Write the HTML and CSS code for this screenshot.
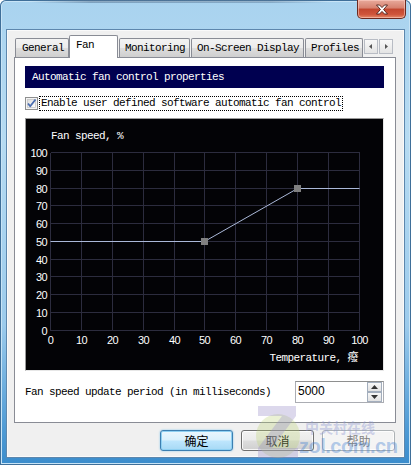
FILE: index.html
```html
<!DOCTYPE html>
<html>
<head>
<meta charset="utf-8">
<link rel="stylesheet" href="styles.css">
</head>
<body>
<div class="window">
  <div class="titlebar">
    <div class="topshade"></div>
    <div class="close">
      <svg width="14" height="11" viewBox="0 0 14 11"><path d="M1.5 1 L4.5 1 L7 3.6 L9.5 1 L12.5 1 L8.6 5.5 L12.5 10 L9.5 10 L7 7.4 L4.5 10 L1.5 10 L5.4 5.5 Z" fill="#fff" stroke="#4a1d17" stroke-width="0.9" stroke-linejoin="round"/></svg>
    </div>
  </div>
  <div class="client">
    <div class="tabs">
      <div class="tab t-general">General</div>
      <div class="tab active t-fan">Fan</div>
      <div class="tab t-mon">Monitoring</div>
      <div class="tab t-osd">On-Screen Display</div>
      <div class="tab t-prof">Profiles</div>
      <div class="tabscroll">
        <span class="sbtn"><svg width="6" height="7" viewBox="0 0 6 7"><path d="M4 1 L1 3.5 L4 6 Z" fill="#555"/></svg></span>
        <span class="sbtn"><svg width="6" height="7" viewBox="0 0 6 7"><path d="M2 1 L5 3.5 L2 6 Z" fill="#555"/></svg></span>
      </div>
    </div>
    <div class="panel">
      <div class="header">Automatic fan control properties</div>
      <div class="checkrow">
        <span class="checkbox">
          <svg width="13" height="13" viewBox="0 0 13 13">
            <defs>
              <linearGradient id="cbg" x1="0" y1="0" x2="1" y2="1">
                <stop offset="0" stop-color="#dcdcdc"/>
                <stop offset="1" stop-color="#ffffff"/>
              </linearGradient>
            </defs>
            <rect x="0.5" y="0.5" width="12" height="12" fill="#f4f4f4" stroke="#8e8f8f"/>
            <rect x="2.5" y="2.5" width="8" height="8" fill="url(#cbg)" stroke="#c6c6c6" stroke-width="0.8"/>
            <path d="M3 6.5 L5.2 9.3 L10.5 2.5" fill="none" stroke="#4a6db0" stroke-width="1.8" stroke-linejoin="round"/>
          </svg>
        </span>
        <span class="focus">Enable user defined software automatic fan control</span>
      </div>
      <div class="graph">
        <svg width="357" height="251" viewBox="0 0 357 251" class="plot">
          <g stroke="#2c2c3e" stroke-width="1" shape-rendering="crispEdges">
            <line x1="24.5" y1="33.5" x2="24.5" y2="211.5"/>
            <line x1="55.5" y1="33.5" x2="55.5" y2="211.5"/>
            <line x1="86.5" y1="33.5" x2="86.5" y2="211.5"/>
            <line x1="117.5" y1="33.5" x2="117.5" y2="211.5"/>
            <line x1="148.5" y1="33.5" x2="148.5" y2="211.5"/>
            <line x1="178.5" y1="33.5" x2="178.5" y2="211.5"/>
            <line x1="209.5" y1="33.5" x2="209.5" y2="211.5"/>
            <line x1="240.5" y1="33.5" x2="240.5" y2="211.5"/>
            <line x1="271.5" y1="33.5" x2="271.5" y2="211.5"/>
            <line x1="302.5" y1="33.5" x2="302.5" y2="211.5"/>
            <line x1="333.5" y1="33.5" x2="333.5" y2="211.5"/>
            <line x1="24.5" y1="33.5" x2="333.5" y2="33.5"/>
            <line x1="24.5" y1="51.5" x2="333.5" y2="51.5"/>
            <line x1="24.5" y1="69.5" x2="333.5" y2="69.5"/>
            <line x1="24.5" y1="86.5" x2="333.5" y2="86.5"/>
            <line x1="24.5" y1="104.5" x2="333.5" y2="104.5"/>
            <line x1="24.5" y1="122.5" x2="333.5" y2="122.5"/>
            <line x1="24.5" y1="140.5" x2="333.5" y2="140.5"/>
            <line x1="24.5" y1="157.5" x2="333.5" y2="157.5"/>
            <line x1="24.5" y1="175.5" x2="333.5" y2="175.5"/>
            <line x1="24.5" y1="193.5" x2="333.5" y2="193.5"/>
            <line x1="24.5" y1="211.5" x2="333.5" y2="211.5"/>
          </g>
          <polyline points="24.5,122.5 178.5,122.5 271.5,69.5 333.5,69.5" fill="none" stroke="#aab8d8" stroke-width="1"/>
          <rect x="175" y="119" width="7" height="7" fill="#808080"/>
          <rect x="268" y="66" width="7" height="7" fill="#808080"/>
          <g class="ylab" text-anchor="end">
            <text x="21" y="37.5">100</text>
            <text x="21" y="55.5">90</text>
            <text x="21" y="73.5">80</text>
            <text x="21" y="90.5">70</text>
            <text x="21" y="108.5">60</text>
            <text x="21" y="126.5">50</text>
            <text x="21" y="144.5">40</text>
            <text x="21" y="161.5">30</text>
            <text x="21" y="179.5">20</text>
            <text x="21" y="197.5">10</text>
            <text x="21" y="215.5">0</text>
          </g>
          <g class="xlab" text-anchor="middle">
            <text x="24.5" y="225">0</text>
            <text x="55.5" y="225">10</text>
            <text x="86.5" y="225">20</text>
            <text x="117.5" y="225">30</text>
            <text x="148.5" y="225">40</text>
            <text x="178.5" y="225">50</text>
            <text x="209.5" y="225">60</text>
            <text x="240.5" y="225">70</text>
            <text x="271.5" y="225">80</text>
            <text x="302.5" y="225">90</text>
            <text x="333.5" y="225">100</text>
          </g>
          <text class="axtitle" x="25" y="20">Fan speed, %</text>
          <text class="axtitle" x="332" y="242" text-anchor="end">Temperature, 癈</text>
        </svg>
      </div>
      <div class="periodrow">
        <span class="plabel">Fan speed update period (in milliseconds)</span>
        <div class="spin">
          <span class="val">5000</span>
          <div class="spinbtns">
            <span class="sb"><svg width="7" height="4" viewBox="0 0 7 4"><path d="M0 4 L3.5 0 L7 4 Z" fill="#333"/></svg></span>
            <span class="sb"><svg width="7" height="4" viewBox="0 0 7 4"><path d="M0 0 L3.5 4 L7 0 Z" fill="#333"/></svg></span>
          </div>
        </div>
      </div>
    </div>
    <div class="buttons">
      <div class="btn default">确定</div>
      <div class="btn">取消</div>
      <div class="btn disabled">帮助</div>
    </div>
  </div>
  <div class="watermark">
    <svg class="zlogo" width="48" height="56" viewBox="0 0 48 56">
      <circle cx="24" cy="32" r="22" fill="#b8d070" opacity="0.3"/>
      <path d="M4 2 L42 2 L42 12 L18 44 L44 44 L44 54 L4 54 L4 44 L28 12 L4 12 Z" fill="#9a8fc8" opacity="0.35"/>
    </svg>
    <div class="wmtext">
      <span class="wm1">中关村在线</span>
      <span class="wm2">zol.com.cn</span>
    </div>
  </div>
</div>
</body>
</html>
```

FILE: styles.css
```css
* { box-sizing: border-box; }
html, body { margin: 0; padding: 0; }
body {
  width: 411px;
  height: 465px;
  overflow: hidden;
  background: #ffffff;
}
.window {
  position: relative;
  width: 411px;
  height: 465px;
  background: linear-gradient(180deg, #a9d3ef 0%, #b6dbf2 30%, #9ccbec 70%, #4f9bd5 92%, #3a8ccc 100%);
  box-shadow: inset 0 0 0 1px #3f6f99, inset 0 0 0 2px #c8e4f6;
  border-radius: 6px 6px 0 0;
  display: flex;
  flex-direction: column;
}
.titlebar {
  height: 30px;
  display: flex;
  justify-content: flex-end;
  align-items: flex-start;
  padding-right: 5px;
  position: relative;
}
.topshade {
  position: absolute;
  left: 30px;
  top: 0;
  width: 300px;
  height: 3px;
  background: linear-gradient(90deg, rgba(90,120,150,0), rgba(90,120,150,0.55) 20%, rgba(90,120,150,0.45) 80%, rgba(90,120,150,0));
}
.close {
  width: 49px;
  height: 19px;
  border: 1px solid #6b2a20;
  border-top: none;
  border-radius: 0 0 5px 5px;
  background: linear-gradient(180deg, #e8aa9c 0%, #d6806e 45%, #c2462f 50%, #cf553b 80%, #e48a68 100%);
  box-shadow: inset 0 0 0 1px rgba(255,210,200,0.55);
  display: flex;
  align-items: center;
  justify-content: center;
}
.client {
  margin: 0 7px;
  width: 397px;
  height: 427px;
  background: #f0f0f0;
  border: 1px solid #fafafa;
  box-shadow: 0 0 0 1px #5d87ad;
  display: flex;
  flex-direction: column;
  font-family: "Liberation Mono", "Noto Sans CJK SC", monospace;
  font-size: 11px;
  letter-spacing: -0.6px;
  color: #000;
}
.tabs {
  display: flex;
  align-items: flex-end;
  height: 23px;
  margin-top: 4px;
  margin-bottom: -1px;
  padding-left: 7px;
  position: relative;
  z-index: 1;
}
.tab {
  height: 19px;
  margin-bottom: 1px;
  line-height: 18px;
  padding: 0 0 0 5px;
  border: 1px solid #898c95;
  border-bottom: none;
  border-radius: 2px 2px 0 0;
  background: linear-gradient(180deg, #f3f3f3 0%, #ebebeb 50%, #dddddd 51%, #cfcfcf 100%);
  white-space: nowrap;
}
.t-general { width: 54px; padding-left: 6px; }
.t-fan { width: 49px; padding-left: 6px; }
.t-mon { width: 71px; margin-left: 1px; }
.t-osd { width: 113px; margin-left: 1px; }
.t-prof { width: 58px; margin-left: 1px; }
.tab.active {
  height: 23px;
  margin-bottom: 0;
  background: #ffffff;
  line-height: 18px;
}
.tabscroll {
  align-self: flex-start;
  margin-top: 4px;
  margin-left: 1px;
  display: flex;
  gap: 1px;
}
.sbtn {
  width: 14px;
  height: 15px;
  border: 1px solid #b8bcc4;
  background: linear-gradient(180deg, #f8f8f8, #e4e4e4);
  display: flex;
  align-items: center;
  justify-content: center;
}
.panel {
  margin-left: 6px;
  width: 382px;
  height: 366px;
  border: 1px solid #898c95;
  background: #ffffff;
  display: flex;
  flex-direction: column;
}
.header {
  margin: 8px 0 0 10px;
  width: 359px;
  height: 22px;
  line-height: 22px;
  padding-left: 7px;
  background: #000050;
  color: #ffffff;
}
.checkrow {
  margin: 8px 0 0 10px;
  height: 15px;
  display: flex;
  align-items: flex-start;
}
.checkbox {
  width: 13px;
  height: 13px;
  margin-top: 1px;
  display: flex;
}
.focus {
  margin-left: 1px;
  height: 15px;
  line-height: 13px;
  padding: 0 1px;
  border: 1px dotted #000;
  white-space: nowrap;
}
.graph {
  margin: 7px 0 0 10px;
  width: 359px;
  height: 253px;
  background: #030306;
  border: 1px solid;
  border-color: #9a9a9a #e6e6e6 #e6e6e6 #9a9a9a;
}
.plot { display: block; }
.ylab text, .xlab text {
  font-family: "Liberation Sans", Arial, sans-serif;
  font-size: 11px;
  fill: #ffffff;
}
.axtitle {
  font-family: "Liberation Mono", "Noto Sans CJK SC", monospace;
  font-size: 11px;
  letter-spacing: -0.6px;
  fill: #ffffff;
}
.periodrow {
  margin: 10px 0 0 10px;
  width: 359px;
  height: 22px;
  display: flex;
  align-items: center;
  justify-content: space-between;
}
.plabel { white-space: nowrap; }
.spin {
  width: 89px;
  height: 22px;
  border: 1px solid #abadb3;
  border-top-color: #8e8f8f;
  background: #fff;
  display: flex;
  justify-content: space-between;
}
.val {
  font-family: "Liberation Sans", Arial, sans-serif;
  font-size: 12px;
  letter-spacing: 0;
  padding: 2px 0 0 2px;
}
.spinbtns {
  display: flex;
  flex-direction: column;
  width: 16px;
  padding: 0 1px 0 0;
}
.sb {
  height: 10px;
  border: 1px solid #a3aebd;
  background: linear-gradient(180deg, #f7f7f7, #e2e2e2);
  display: flex;
  align-items: center;
  justify-content: center;
}
.buttons {
  margin-top: 7px;
  display: flex;
  justify-content: flex-end;
  gap: 8px;
  padding-right: 8px;
}
.btn {
  width: 73px;
  height: 21px;
  border: 1px solid #707070;
  border-radius: 3px;
  background: linear-gradient(180deg, #f2f2f2 0%, #ebebeb 48%, #dddddd 52%, #cfcfcf 100%);
  box-shadow: inset 0 0 0 1px rgba(255,255,255,0.8);
  font-family: "Noto Sans CJK SC", sans-serif;
  font-size: 12px;
  letter-spacing: 0;
  line-height: 19px;
  text-align: center;
  color: #000;
}
.btn.default {
  border-color: #3c7fb1;
  background: linear-gradient(180deg, #eaf6fd 0%, #d9f0fc 48%, #bee6fd 52%, #a7d9f5 100%);
  box-shadow: inset 0 0 0 1px #8fd0f2, 0 0 2px #7cc2ea;
}
.btn.disabled {
  border-color: #adb2b5;
  background: #f4f4f4;
  color: #838383;
}
.watermark {
  position: absolute;
  left: 254px;
  top: 404px;
  display: flex;
  align-items: flex-start;
  pointer-events: none;
}
.zlogo { display: block; }
.wmtext {
  display: flex;
  flex-direction: column;
  margin-left: 3px;
  margin-top: 15px;
}
.wm1 {
  font-family: "Noto Sans CJK SC", sans-serif;
  font-weight: 700;
  font-size: 14px;
  line-height: 17px;
  color: rgba(140, 150, 210, 0.4);
  letter-spacing: 0;
}
.wm2 {
  font-family: "Liberation Sans", Arial, sans-serif;
  font-weight: 700;
  font-size: 20px;
  line-height: 20px;
  margin-left: -6px;
  color: rgba(70, 130, 210, 0.4);
  letter-spacing: -0.5px;
}
```
